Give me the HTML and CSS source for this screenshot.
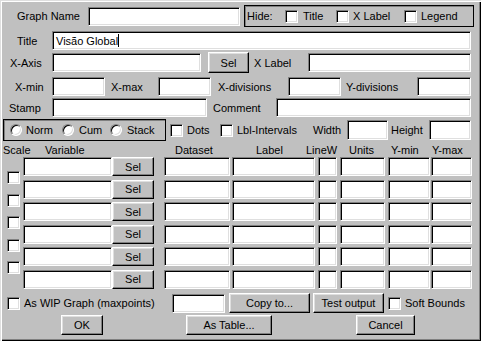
FILE: index.html
```html
<!DOCTYPE html>
<html lang="pt">
<head>
    <meta charset="UTF-8">
    <title>Graph</title>
    <link rel="stylesheet" href="styles.css">
</head>
<body>
    <div class="dialog">
        <div class="row row1">
            <span class="lbl lbl-graphname">Graph Name</span>
            <input class="field f-graphname">
            <div class="group hide-group">
                <span class="lbl lbl-hide">Hide:</span>
                <span class="check"></span>
                <span class="lbl lbl-hidetitle">Title</span>
                <span class="check"></span>
                <span class="lbl lbl-hidexlabel">X Label</span>
                <span class="check"></span>
                <span class="lbl lbl-hidelegend">Legend</span>
            </div>
        </div>

        <div class="row row2">
            <span class="lbl lbl-title">Title</span>
            <div class="field field-text f-title">Visão Global<span class="caret"></span></div>
        </div>

        <div class="row row3">
            <span class="lbl lbl-xaxis">X-Axis</span>
            <input class="field f-xaxis">
            <button class="btn btn-xsel">Sel</button>
            <span class="lbl lbl-xlabel">X Label</span>
            <input class="field f-xlabel">
        </div>

        <div class="row row4">
            <span class="lbl lbl-xmin">X-min</span>
            <input class="field f-small">
            <span class="lbl lbl-xmax">X-max</span>
            <input class="field f-small">
            <span class="lbl lbl-xdiv">X-divisions</span>
            <input class="field f-small">
            <span class="lbl lbl-ydiv">Y-divisions</span>
            <input class="field f-ydiv">
        </div>

        <div class="row row5">
            <span class="lbl lbl-stamp">Stamp</span>
            <input class="field f-stamp">
            <span class="lbl lbl-comment">Comment</span>
            <input class="field f-comment">
        </div>

        <div class="row row6">
            <div class="group radio-group">
                <span class="radio radio-first"></span>
                <span class="lbl lbl-norm">Norm</span>
                <span class="radio"></span>
                <span class="lbl lbl-cum">Cum</span>
                <span class="radio"></span>
                <span class="lbl lbl-stack">Stack</span>
            </div>
            <span class="check check-dots"></span>
            <span class="lbl lbl-dots">Dots</span>
            <span class="check"></span>
            <span class="lbl lbl-intervals">Lbl-Intervals</span>
            <span class="lbl lbl-width">Width</span>
            <input class="field f-width">
            <span class="lbl lbl-height">Height</span>
            <input class="field f-height">
        </div>

        <div class="row header">
            <span class="lbl h-scale">Scale</span>
            <span class="lbl h-variable">Variable</span>
            <span class="lbl h-dataset">Dataset</span>
            <span class="lbl h-label">Label</span>
            <span class="lbl h-linew">LineW</span>
            <span class="lbl h-units">Units</span>
            <span class="lbl h-ymin">Y-min</span>
            <span class="lbl">Y-max</span>
        </div>

        <div class="table">
            <div class="scale-col">
                <span class="check"></span>
                <span class="check"></span>
                <span class="check"></span>
                <span class="check"></span>
                <span class="check"></span>
            </div>
            <div class="rows js-rows"></div>
        </div>

        <div class="row bottom">
            <span class="check check-wip"></span>
            <span class="lbl lbl-wip">As WIP Graph (maxpoints)</span>
            <input class="field f-maxpoints">
            <button class="btn btn-copy">Copy to...</button>
            <button class="btn btn-test">Test output</button>
            <span class="check check-soft"></span>
            <span class="lbl lbl-soft">Soft Bounds</span>
        </div>

        <div class="row actions">
            <button class="btn btn-ok">OK</button>
            <button class="btn btn-table">As Table...</button>
            <button class="btn btn-cancel">Cancel</button>
        </div>
    </div>

    <script>
        // six identical series rows
        const rows = document.querySelector('.js-rows');
        for (let i = 0; i < 6; i++) {
            const row = document.createElement('div');
            row.className = 'series';
            row.innerHTML = `
                <input class="field c-var">
                <button class="btn c-sel">Sel</button>
                <input class="field c-data">
                <input class="field c-label">
                <input class="field c-linew">
                <input class="field c-units">
                <input class="field c-ymin">
                <input class="field c-ymax">
            `;
            rows.appendChild(row);
        }
    </script>
</body>
</html>
```

FILE: styles.css
```css
body {
    margin: 0;
    background: #c0c0c0;
    font-family: "Liberation Sans", Arial, sans-serif;
    font-size: 11px;
    color: #000;
}

.dialog {
    width: 481px;
    height: 341px;
    box-sizing: border-box;
    overflow: hidden;
    background: #c0c0c0;
    box-shadow: inset 1px 1px #dfdfdf, inset 2px 2px #fff,
                inset -1px -1px #000, inset -2px -2px #808080;
}

.row {
    display: flex;
    align-items: center;
}

.lbl {
    display: inline-block;
    white-space: nowrap;
    flex: none;
}

/* sunken edit box */
.field {
    box-sizing: border-box;
    height: 19px;
    margin: 0;
    padding: 0 2px;
    flex: none;
    background: #fff;
    font: inherit;
    border-top: 1px solid #808080;
    border-left: 1px solid #808080;
    border-right: 1px solid #fff;
    border-bottom: 1px solid #fff;
    box-shadow: inset 1px 1px #000, inset -1px -1px #dfdfdf;
    outline: none;
}

.field-text {
    display: flex;
    align-items: center;
    padding-left: 3px;
}

.caret {
    width: 1px;
    height: 13px;
    background: #000;
}

/* raised push button */
.btn {
    box-sizing: border-box;
    height: 20px;
    margin: 0;
    padding: 0;
    flex: none;
    background: #c0c0c0;
    font: inherit;
    color: #000;
    border-top: 1px solid #fff;
    border-left: 1px solid #fff;
    border-right: 1px solid #000;
    border-bottom: 1px solid #000;
    box-shadow: inset -1px -1px #808080, inset 1px 1px #dfdfdf;
}

.check {
    box-sizing: border-box;
    width: 13px;
    height: 13px;
    flex: none;
    background: #fff;
    border-top: 1px solid #808080;
    border-left: 1px solid #808080;
    border-right: 1px solid #fff;
    border-bottom: 1px solid #fff;
    box-shadow: inset 1px 1px #000, inset -1px -1px #dfdfdf;
}

.radio {
    box-sizing: border-box;
    width: 12px;
    height: 12px;
    flex: none;
    border-radius: 50%;
    background: #fff;
    border: 1px solid;
    border-color: #808080 #fff #fff #808080;
    box-shadow: inset 1px 1px #000, inset -1px -1px #dfdfdf;
}

.group {
    box-sizing: border-box;
    display: flex;
    align-items: center;
    height: 22px;
    flex: none;
    border: 1px solid #000;
    box-shadow: inset 1px 1px #808080;
}

/* row 1 */
.row1 {
    height: 22px;
    margin-top: 5px;
}

.lbl-graphname { margin-left: 17px; width: 71px; }
.f-graphname { width: 152px; }

.hide-group {
    width: 230px;
    margin-left: 4px;
}

.lbl-hide { margin-left: 2px; width: 38px; }
.lbl-hidetitle { margin-left: 5px; width: 33px; }
.lbl-hidexlabel { margin-left: 4px; width: 51px; }
.lbl-hidelegend { margin-left: 4px; }

/* row 2 */
.row2 {
    height: 19px;
    margin-top: 4px;
}

.lbl-title { margin-left: 17px; width: 35px; }
.f-title { width: 419px; }

/* row 3 */
.row3 {
    height: 21px;
    margin-top: 2px;
}

.lbl-xaxis { margin-left: 10px; width: 42px; }
.f-xaxis { width: 149px; }
.btn-xsel { margin-left: 7px; width: 41px; height: 21px; }
.lbl-xlabel { margin-left: 5px; width: 54px; }
.f-xlabel { width: 163px; }

/* row 4 */
.row4 {
    height: 19px;
    margin-top: 4px;
}

.lbl-xmin { margin-left: 15px; width: 37px; }
.lbl-xmax { margin-left: 6px; width: 47px; }
.lbl-xdiv { margin-left: 7px; width: 70px; }
.lbl-ydiv { margin-left: 5px; width: 71px; }
.f-small { width: 53px; }
.f-ydiv { width: 54px; }

/* row 5 */
.row5 {
    height: 19px;
    margin-top: 2px;
}

.lbl-stamp { margin-left: 9px; width: 43px; }
.f-stamp { width: 155px; }
.lbl-comment { margin-left: 6px; width: 63px; }
.f-comment { width: 195px; }

/* row 6 */
.row6 {
    height: 22px;
    margin-top: 2px;
}

.radio-group {
    width: 163px;
    margin-left: 3px;
}

.radio-first { margin-left: 6px; }
.lbl-norm { margin-left: 4px; width: 36px; }
.lbl-cum { margin-left: 5px; width: 31px; }
.lbl-stack { margin-left: 5px; }
.check-dots { margin-left: 4px; }
.lbl-dots { margin-left: 4px; width: 33px; }
.lbl-intervals { margin-left: 4px; width: 76px; }
.lbl-width { width: 34px; }
.f-width { width: 41px; height: 20px; }
.lbl-height { margin-left: 3px; width: 38px; }
.f-height { width: 42px; height: 20px; }

/* series table */
.header {
    height: 13px;
    margin-top: 2px;
}

.h-scale { margin-left: 3px; width: 42px; }
.h-variable { width: 130px; }
.h-dataset { width: 81px; }
.h-label { width: 50px; }
.h-linew { width: 43px; }
.h-units { width: 42px; }
.h-ymin { width: 41px; }

.table {
    display: flex;
    margin-top: 1px;
    height: 134px;
}

.scale-col {
    width: 23px;
    display: flex;
    flex-direction: column;
    gap: 9.5px;
    padding-top: 14px;
    box-sizing: border-box;
}

.scale-col .check {
    margin-left: 7px;
}

.rows {
    display: flex;
    flex-direction: column;
    gap: 3.5px;
}

.series {
    display: flex;
    height: 19px;
}

.series .field,
.series .btn {
    height: 19px;
}

.c-var { width: 89px; }
.c-sel { width: 42px; }
.c-data { width: 66px; margin-left: 10px; }
.c-label { width: 83px; margin-left: 2px; }
.c-linew { width: 19px; margin-left: 3px; }
.c-units { width: 45px; margin-left: 3px; }
.c-ymin { width: 42px; margin-left: 3px; }
.c-ymax { width: 41px; margin-left: 1px; }

/* bottom rows */
.bottom {
    height: 20px;
    margin-top: 2px;
}

.check-wip { margin-left: 7px; }
.lbl-wip { margin-left: 4px; width: 148px; }
.f-maxpoints { width: 53px; }
.btn-copy { margin-left: 4px; width: 81px; }
.btn-test { margin-left: 3px; width: 71px; }
.check-soft { margin-left: 4px; }
.lbl-soft { margin-left: 4px; }

.actions {
    height: 20px;
    margin-top: 2px;
}

.btn-ok { margin-left: 61px; width: 42px; }
.btn-table { margin-left: 83px; width: 86px; }
.btn-cancel { margin-left: 84px; width: 59px; }
```
